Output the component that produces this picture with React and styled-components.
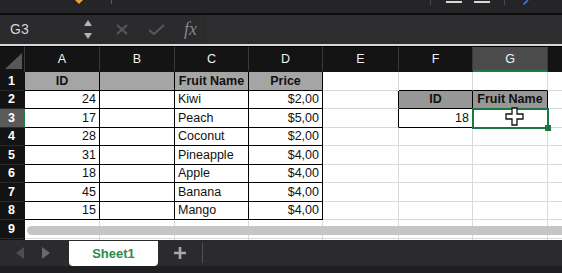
import React from "react";
import styled, { createGlobalStyle } from "styled-components";

const Global = createGlobalStyle`
  html, body { margin: 0; padding: 0; background: #232225; overflow: hidden; }
  #root { width: 562px; height: 273px; }
`;

const Frame = styled.div`
  width: 562px;
  height: 273px;
  display: flex;
  flex-direction: column;
  overflow: hidden;
  font-family: "Liberation Sans", Arial, sans-serif;
  background: #2a292c;
`;

/* ---------- ribbon remnant ---------- */
const Ribbon = styled.div`
  flex: none;
  height: 13px;
  background: #252427;
  display: flex;
  align-items: flex-start;
`;
const RibbonMark = styled.div`
  flex: none;
  margin-left: ${p => p.$ml}px;
  width: ${p => p.$w}px;
  height: ${p => p.$h}px;
  margin-top: ${p => p.$mt || 0}px;
  background: ${p => p.$c};
`;
const RibbonIcon = styled.svg`
  flex: none;
  margin-left: ${p => p.$ml}px;
  display: block;
`;
const BlackRule = styled.div`
  flex: none;
  height: 2px;
  background: #0c0c0d;
`;

/* ---------- formula bar ---------- */
const FormulaBar = styled.div`
  flex: none;
  height: 29px;
  background: #2b2a2d;
  display: flex;
  align-items: center;
`;
const NameBox = styled.div`
  flex: none;
  width: 73px;
  padding-left: 10px;
  color: #d6d6d6;
  font-size: 14px;
  line-height: 29px;
`;
const Stepper = styled.div`
  flex: none;
  width: 9px;
  display: flex;
  flex-direction: column;
  align-items: center;
  gap: 7px;
`;
const Tri = styled.div`
  width: 0;
  height: 0;
  border-left: 4.5px solid transparent;
  border-right: 4.5px solid transparent;
  ${p => (p.$up ? "border-bottom" : "border-top")}: 6px solid #b4b4b4;
`;
const BarIcon = styled.svg`
  flex: none;
  margin-left: ${p => p.$ml}px;
  display: block;
`;
const Fx = styled.div`
  flex: none;
  margin-left: 19px;
  font-family: "Liberation Serif", "DejaVu Serif", serif;
  font-style: italic;
  font-size: 18px;
  color: #858585;
  line-height: 29px;
`;
const FormulaInput = styled.div`
  flex: 1;
  align-self: stretch;
  margin-left: 10px;
  background: #2e2d30;
`;
const LightRule = styled.div`
  flex: none;
  height: 2px;
  background: #d7d7d7;
`;

/* ---------- sheet grid ---------- */
const Sheet = styled.div`
  flex: none;
  height: 194px;
  position: relative;
  overflow: hidden;
  background: #fff;
  display: grid;
  grid-template-columns: 25px 75px 75px 74px 74px 76px 74px 75px 75px;
  grid-template-rows: 26px repeat(10, 18.5px);
`;
const Corner = styled.div`
  box-sizing: border-box;
  background: #141414;
  border-top: 1px solid #000;
  border-right: 1px solid #3a3a3a;
  display: flex;
  align-items: flex-end;
  justify-content: flex-end;
  padding: 0 2px 3px 0;
`;
const ColHead = styled.div`
  box-sizing: border-box;
  background: ${p => (p.$active ? "#4b4b4b" : "#141414")};
  border-top: 1px solid #000;
  border-right: 1px solid #3a3a3a;
  border-bottom: 2px solid ${p => (p.$active ? "#1f7b44" : "#141414")};
  color: #f2f2f2;
  font-size: 12.5px;
  display: flex;
  align-items: center;
  justify-content: center;
`;
const RowHead = styled.div`
  box-sizing: border-box;
  background: ${p => (p.$active ? "#5a5a5a" : "#131313")};
  border-bottom: 1px solid #2a2a2a;
  border-right: 2px solid ${p => (p.$active ? "#1f7b44" : "#131313")};
  color: #fff;
  font-weight: 700;
  font-size: 12.5px;
  display: flex;
  align-items: center;
  justify-content: center;
`;
const Cell = styled.div`
  box-sizing: border-box;
  position: relative;
  min-width: 0;
  display: flex;
  align-items: center;
  justify-content: ${p =>
    p.$align === "right" ? "flex-end" : p.$align === "center" ? "center" : "flex-start"};
  padding: 0 3px 0 3px;
  background: ${p => p.$bg || "#fff"};
  border-right: 1px solid ${p => (p.$darkR ? "#000" : "#d9d9d9")};
  border-bottom: 1px solid ${p => (p.$darkB ? "#000" : "#d9d9d9")};
  font-size: 12.5px;
  font-weight: ${p => (p.$bold ? 700 : 400)};
  color: #111;
  white-space: nowrap;
  ${p =>
    p.$selected &&
    `
    z-index: 2;
    outline: 2px solid #1e7544;
    outline-offset: -1px;
    &::after {
      content: "";
      position: absolute;
      right: -4px;
      bottom: -4px;
      width: 6px;
      height: 6px;
      background: #1e7544;
    }
  `}
`;
const Cursor = styled.svg`
  position: absolute;
  left: 32px;
  top: -2px;
  display: block;
`;
const Scrollbar = styled.div`
  position: absolute;
  left: 27px;
  right: -10px;
  top: 180px;
  height: 9px;
  border-radius: 5px;
  background: #c5c5c5;
`;

/* ---------- sheet tabs ---------- */
const TabBar = styled.div`
  flex: none;
  height: 26px;
  background: #2b2a2d;
  display: flex;
  align-items: stretch;
`;
const NavArrows = styled.div`
  flex: none;
  width: 69px;
  display: flex;
  align-items: center;
  padding-left: 16px;
  gap: 18px;
  box-sizing: border-box;
`;
const NavTri = styled.div`
  width: 0;
  height: 0;
  border-top: 6px solid transparent;
  border-bottom: 6px solid transparent;
  ${p => (p.$left ? "border-right" : "border-left")}: 8px solid ${p => p.$c};
`;
const Tab = styled.div`
  flex: none;
  width: 89px;
  margin-top: 1px;
  background: #fff;
  border-radius: 0 0 4px 4px;
  display: flex;
  align-items: center;
  justify-content: center;
  color: #2c8a4b;
  font-weight: 700;
  font-size: 13px;
`;
const AddTab = styled.div`
  flex: none;
  width: 44px;
  display: flex;
  align-items: center;
  justify-content: center;
`;
const TabDivider = styled.div`
  flex: none;
  width: 1px;
  margin: 3px 0 3px 0;
  background: #505050;
`;
const BottomStrip = styled.div`
  flex: none;
  height: 7px;
  background: #1f1e21;
`;

/* H is only a sliver at the window edge, its letter is out of view */
const COLS = ["A", "B", "C", "D", "E", "F", "G", ""];
const TABLE = [
  ["ID", "", "Fruit Name", "Price"],
  ["24", "", "Kiwi", "$2,00"],
  ["17", "", "Peach", "$5,00"],
  ["28", "", "Coconut", "$2,00"],
  ["31", "", "Pineapple", "$4,00"],
  ["18", "", "Apple", "$4,00"],
  ["45", "", "Banana", "$4,00"],
  ["15", "", "Mango", "$4,00"],
];

function cellSpec(r, c) {
  if (c < 4 && r <= 8) {
    const head = r === 1;
    return {
      v: TABLE[r - 1][c],
      bg: head ? "#a5a5a5" : "#fff",
      bold: head,
      align: head ? "center" : c === 0 || c === 3 ? "right" : "left",
      darkR: true,
      darkB: true,
    };
  }
  if (r === 2 && (c === 5 || c === 6))
    return { v: c === 5 ? "ID" : "Fruit Name", bg: "#979797", bold: true, align: "center", darkR: true, darkB: true };
  if (r === 3 && c === 5) return { v: "18", align: "right", darkR: true, darkB: true };
  if (r === 3 && c === 6) return { v: "", darkR: true, darkB: true, selected: true };
  if (c === 4 && (r === 2 || r === 3)) return { v: "", darkR: true };
  if (r === 1 && (c === 5 || c === 6)) return { v: "", darkB: true };
  return { v: "" };
}

function PlusCursor() {
  return (
    <Cursor width="19" height="19" viewBox="0 0 19 19">
      <path
        d="M7 1 H12 V7 H18 V12 H12 V18 H7 V12 H1 V7 H7 Z"
        fill="#fff"
        stroke="#111"
        strokeWidth="1.3"
        strokeLinejoin="miter"
      />
    </Cursor>
  );
}

export default function App() {
  const rows = [];
  for (let r = 1; r <= 10; r++) {
    rows.push(
      <RowHead key={`rh${r}`} $active={r === 3}>
        {r < 10 ? r : ""}
      </RowHead>
    );
    COLS.forEach((col, c) => {
      const s = cellSpec(r, c);
      rows.push(
        <Cell
          key={`c${c}r${r}`}
          $bg={s.bg}
          $bold={s.bold}
          $align={s.align}
          $darkR={s.darkR}
          $darkB={s.darkB}
          $selected={s.selected}
        >
          {s.v}
          {s.selected && <PlusCursor />}
        </Cell>
      );
    });
  }

  return (
    <>
      <Global />
      <Frame>
        <Ribbon>
          <RibbonIcon $ml={75} width="8" height="4" viewBox="0 0 8 4">
            <path d="M0 0 H8 L4 4 Z" fill="#f0a030" />
          </RibbonIcon>
          <RibbonMark $ml={28} $w={1} $h={4} $c="#5a5a5a" />
          <RibbonMark $ml={318} $w={1} $h={5} $c="#4a4a4a" />
          <RibbonMark $ml={15} $w={16} $h={2} $mt={1} $c="#d8d8d8" />
          <RibbonMark $ml={12} $w={16} $h={2} $mt={1} $c="#d8d8d8" />
          <RibbonMark $ml={14} $w={1} $h={5} $c="#4a4a4a" />
          <RibbonIcon $ml={18} width="7" height="5" viewBox="0 0 7 5">
            <path d="M0.5 4.5 L5 0" stroke="#3d7fd6" strokeWidth="1.6" />
          </RibbonIcon>
        </Ribbon>
        <BlackRule />
        <FormulaBar>
          <NameBox>G3</NameBox>
          <Stepper>
            <Tri $up />
            <Tri />
          </Stepper>
          <BarIcon $ml={24} width="12" height="11" viewBox="0 0 12 11">
            <path d="M1 1 L11 10 M11 1 L1 10" stroke="#575757" strokeWidth="2.2" />
          </BarIcon>
          <BarIcon $ml={20} width="17" height="11" viewBox="0 0 17 11">
            <path d="M1 6 L6 10 L16 1" stroke="#575757" strokeWidth="2.2" fill="none" />
          </BarIcon>
          <Fx>fx</Fx>
          <FormulaInput />
        </FormulaBar>
        <LightRule />
        <Sheet>
          <Corner>
            <svg width="17" height="16" viewBox="0 0 17 16">
              <path d="M0 16 L17 0 V16 Z" fill="#575757" />
            </svg>
          </Corner>
          {COLS.map((c, i) => (
            <ColHead key={`h${i}`} $active={c === "G"}>
              {c}
            </ColHead>
          ))}
          {rows}
          <Scrollbar />
        </Sheet>
        <TabBar>
          <NavArrows>
            <NavTri $left $c="#4e4e4e" />
            <NavTri $c="#6a6a6a" />
          </NavArrows>
          <Tab>Sheet1</Tab>
          <AddTab>
            <svg width="12" height="12" viewBox="0 0 12 12">
              <path d="M6 0 V12 M0 6 H12" stroke="#a8a8a8" strokeWidth="2.6" />
            </svg>
          </AddTab>
          <TabDivider />
        </TabBar>
        <BottomStrip />
      </Frame>
    </>
  );
}
